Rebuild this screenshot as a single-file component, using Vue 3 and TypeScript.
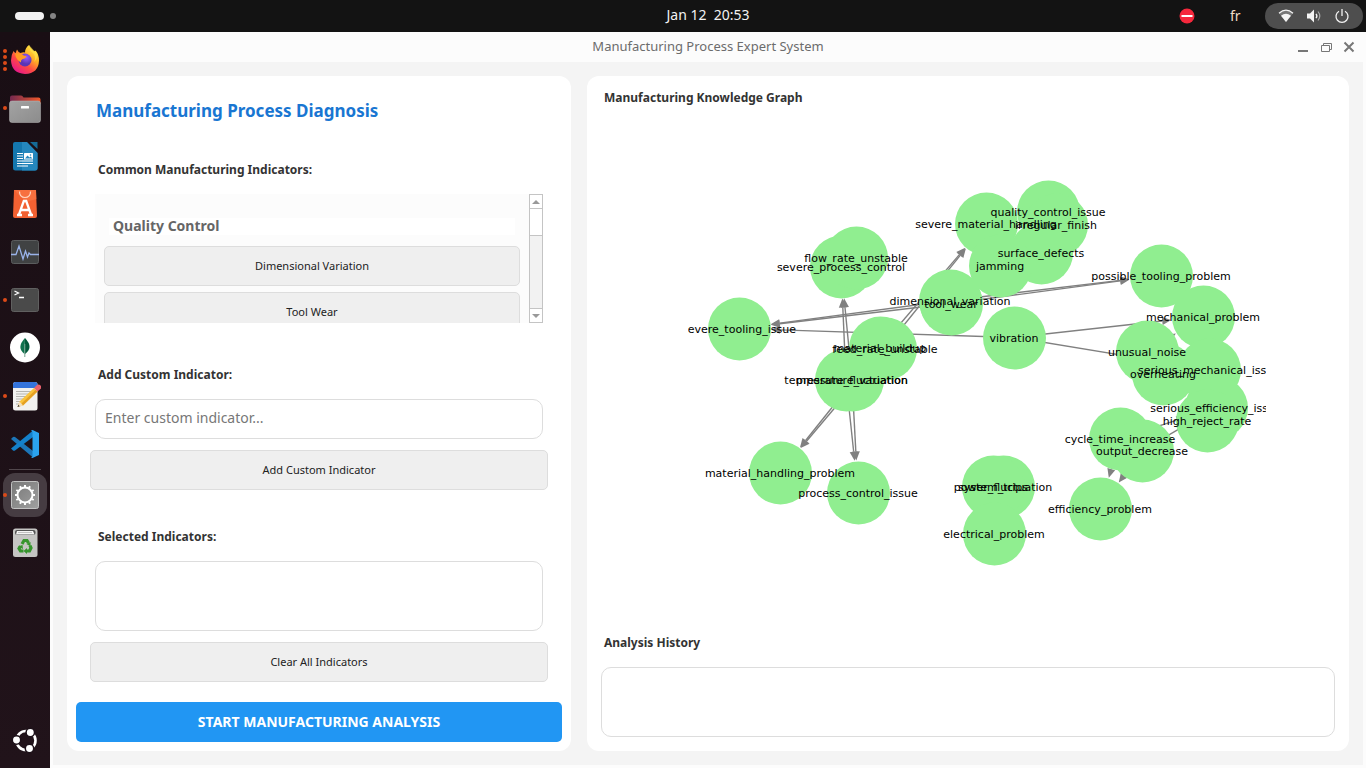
<script setup lang="ts">
import { computed, ref } from 'vue'

type Point = [number, number]

const RADIUS = 32
const HEAD = 9

const nodes: Record<string, Point> = {
  severe_tooling_issue: [50, 222],
  severe_process_control: [152, 160],
  flow_rate_unstable: [167, 151],
  severe_material_handling: [297, 117],
  quality_control_issue: [359, 105],
  irregular_finish: [367, 118],
  surface_defects: [352, 146],
  jamming: [311, 159],
  possible_tooling_problem: [472, 169],
  mechanical_problem: [514, 210],
  dimensional_variation: [261, 194],
  tool_wear: [262, 197],
  vibration: [325, 231],
  unusual_noise: [458, 245],
  overheating: [474, 267],
  serious_mechanical_issue: [520, 263],
  serious_efficiency_issue: [527, 301],
  high_reject_rate: [518, 314],
  cycle_time_increase: [431, 332],
  output_decrease: [453, 344],
  efficiency_problem: [411, 402],
  power_fluctuation: [314, 380],
  system_trips: [304, 380],
  electrical_problem: [305, 427],
  material_handling_problem: [91, 366],
  process_control_issue: [169, 386],
  feed_rate_unstable: [196, 242],
  material_buildup: [191, 241],
  temperature_variation: [157, 273],
  pressure_fluctuation: [163, 273],
}

const links: [string, string][] = [
  ['dimensional_variation', 'severe_tooling_issue'],
  ['tool_wear', 'severe_tooling_issue'],
  ['vibration', 'severe_tooling_issue'],
  ['dimensional_variation', 'possible_tooling_problem'],
  ['tool_wear', 'possible_tooling_problem'],
  ['vibration', 'mechanical_problem'],
  ['vibration', 'serious_mechanical_issue'],
  ['unusual_noise', 'mechanical_problem'],
  ['material_buildup', 'severe_material_handling'],
  ['feed_rate_unstable', 'severe_material_handling'],
  ['material_buildup', 'material_handling_problem'],
  ['feed_rate_unstable', 'material_handling_problem'],
  ['temperature_variation', 'severe_process_control'],
  ['pressure_fluctuation', 'severe_process_control'],
  ['temperature_variation', 'process_control_issue'],
  ['pressure_fluctuation', 'process_control_issue'],
  ['cycle_time_increase', 'efficiency_problem'],
  ['output_decrease', 'efficiency_problem'],
  ['cycle_time_increase', 'serious_efficiency_issue'],
  ['output_decrease', 'serious_efficiency_issue'],
]

const edges = computed(() =>
  links.map(([from, to]) => {
    const [x1, y1] = nodes[from]
    const [x2, y2] = nodes[to]
    const len = Math.hypot(x2 - x1, y2 - y1)
    const ux = (x2 - x1) / len
    const uy = (y2 - y1) / len
    const tx = x2 - ux * RADIUS
    const ty = y2 - uy * RADIUS
    const bx = tx - ux * HEAD
    const by = ty - uy * HEAD
    return {
      key: from + to,
      x1,
      y1,
      bx,
      by,
      head: `${tx},${ty} ${bx - uy * 4},${by + ux * 4} ${bx + uy * 4},${by - ux * 4}`,
    }
  }),
)

const gearTeeth = Array.from({ length: 12 }, (_, i) => i * 30)
const custom = ref('')
const selected = ref('')
const history = ref('')
const indicators = ['Dimensional Variation', 'Tool Wear']
</script>

<template>
  <div class="desktop">
    <header class="topbar">
      <div class="workspaces"><i class="pill"></i><i class="dot"></i></div>
      <time class="clock">Jan 12&nbsp; 20:53</time>
      <div class="tray">
        <svg class="busy" viewBox="0 0 16 16"><circle cx="8" cy="8" r="7.5" fill="#f5283c" /><path d="M2.5 8h11" stroke="#fff" stroke-width="2" /></svg>
        <span class="lang">fr</span>
        <button class="status" aria-label="System menu">
          <svg viewBox="0 0 16 16"><path d="M8 14 1 5.2Q8-.8 15 5.2Z" fill="#777" /><path d="M8 14 3 7.7Q8 4 13 7.7Z" fill="#f4f4f4" /><path d="M1 5.2Q8-.8 15 5.2" fill="none" stroke="#f4f4f4" stroke-width="1.3" /></svg>
          <svg viewBox="0 0 16 16"><path d="M1 5.5h3L8 1.5v13L4 10.5H1Z" fill="#f4f4f4" /><path d="M10 5.8q1.8 2.2 0 4.4" fill="none" stroke="#f4f4f4" stroke-width="1.3" /><path d="M12 3.5q3.6 4.5 0 9" fill="none" stroke="#aaa" stroke-width="1.2" /></svg>
          <svg viewBox="0 0 16 16"><path d="M5 3.2a6 6 0 1 0 6 0M8 1v7" fill="none" stroke="#f4f4f4" stroke-width="1.3" /></svg>
        </button>
      </div>
    </header>

    <div class="workarea">
      <nav class="dock" aria-label="Dock">
        <button class="app" aria-label="Firefox">
          <span class="running"><i v-for="n in 4" :key="n"></i></span>
          <svg viewBox="0 0 32 32">
            <defs>
              <linearGradient id="fox" x1=".85" y1=".05" x2=".2" y2=".95"><stop offset="0" stop-color="#fff14a" /><stop offset=".35" stop-color="#ffae25" /><stop offset=".65" stop-color="#ff4a43" /><stop offset="1" stop-color="#e6168c" /></linearGradient>
              <radialGradient id="globe" cx=".6" cy=".3"><stop offset="0" stop-color="#9a5cff" /><stop offset="1" stop-color="#5a35b5" /></radialGradient>
            </defs>
            <path d="M4.5 7q1 1.5 2 2.2L8 5.5q1 2.5 3.5 3.5 2.5-1 4.5-.5Q16 4 20 1q1 3.500 4.500 6 1.500.7 2-.5Q30 10.500 30 16.500 29.500 29.500 16 30 2.500 29 2 16.500 2 11 4.500 7Z" fill="url(#fox)" />
            <circle cx="16" cy="16" r="6.500" fill="url(#globe)" />
            <path d="M6 9.500q5-1 7.500 1 1 1.500 4 1.500-.5 2.500-4 3-2 1-1.500 3.500Q7 16 6 9.500Z" fill="#ff9b24" />
            <path d="M20 1q0 5 4 8 3.500 4 1 9 4-3 3-9-4-3-8-8Z" fill="#ffe14a" opacity=".7" />
          </svg>
        </button>
        <button class="app" aria-label="Files">
          <span class="running"><i></i></span>
          <svg viewBox="0 0 32 32">
            <defs><linearGradient id="fold"><stop offset="0" stop-color="#74294f" /><stop offset="1" stop-color="#f0592b" /></linearGradient><linearGradient id="fbody" x2="1" y2="1"><stop offset="0" stop-color="#a3a3a3" /><stop offset="1" stop-color="#8c8c8c" /></linearGradient></defs>
            <path d="M1 12V5.500Q1 3.500 3 3.500h9q1.500 0 2.500 2h15q2 0 2 2V12Z" fill="url(#fold)" />
            <rect x=".5" y="9" width="31" height="21.500" rx="2.500" fill="url(#fbody)" stroke="#b9b9b9" stroke-width=".5" />
            <rect x="12" y="14" width="8" height="2.500" rx=".5" fill="#fff" />
          </svg>
        </button>
        <button class="app" aria-label="LibreOffice Writer">
          <span class="running"></span>
          <svg viewBox="0 0 32 32">
            <path d="M6 2h11.500L28.500 13v15q0 2.500-2.500 2.500H6.500Q4 30.500 4 28V4q0-2 2-2Z" fill="#1477ae" />
            <path d="M13 2h5L28.500 13v15q0 2.500-2.500 2.500H13Z" fill="#2587bd" />
            <path d="M21 2h7.500v7Z" fill="#156a96" />
            <path d="M8 13.500h6M8 16h6M8 18.500h6M8 21h16M8 23.500h16M8 26h11" stroke="#fff" stroke-width="1.200" />
            <rect x="15" y="13" width="9" height="6.500" rx=".5" fill="#fff" /><path d="m16 18.500 2.500-3 2 2 1-1 2 2Z" fill="#2587bd" /><circle cx="21.500" cy="15" r=".8" fill="#2587bd" />
          </svg>
        </button>
        <button class="app" aria-label="Software">
          <span class="running"></span>
          <svg viewBox="0 0 32 32">
            <path d="M5 2h22l1 26q0 2-2 2H6q-2 0-2-2Z" fill="#f26132" /><path d="M5 2h22l.4 9L17 14Z" fill="#fa7947" opacity=".6" />
            <path d="M10.500 3.500q0 6 5.500 6t5.500-6" fill="none" stroke="#ffd5c0" stroke-width="1.200" /><path d="M10 26.500 14.800 13h2.400L22 26.500M8 27h5m6 0h5M11 22h10" fill="none" stroke="#fff" stroke-width="2.300" />
          </svg>
        </button>
        <button class="app" aria-label="System Monitor">
          <span class="running"></span>
          <svg viewBox="0 0 32 32"><rect x="2.500" y="4.500" width="27" height="23" rx="2" fill="#404243" stroke="#5b5d5e" /><path d="M2 18.500h5l3-8.500 4 13 2.500-8 2 6 1.500-4 1.500 1.500H30" fill="none" stroke="#9ab3ea" stroke-width="1.300" /></svg>
        </button>
        <button class="app" aria-label="Terminal">
          <span class="running"><i></i></span>
          <svg viewBox="0 0 32 32"><rect x="2.500" y="4.500" width="27" height="23" rx="2" fill="#4a4a4a" stroke="#606060" /><path d="m5.500 7 4 2-4 2M10 13.500h5" fill="none" stroke="#fff" stroke-width="1.300" /></svg>
        </button>
        <button class="app" aria-label="MongoDB Compass">
          <span class="running"></span>
          <svg viewBox="0 0 32 32"><circle cx="16" cy="15.500" r="15" fill="#fff" /><path d="M16 6q-9 9.500-.5 16Z" fill="#10734e" /><path d="M16 6q9 9.500 0 16Z" fill="#045a3b" /><path d="M15.800 12v13" stroke="#73a18d" /></svg>
        </button>
        <button class="app" aria-label="Text Editor">
          <span class="running"><i></i></span>
          <svg viewBox="0 0 32 32">
            <rect x="4" y="2" width="24.500" height="28.500" rx="2.500" fill="#f1f1ef" /><path d="M4 8V4.500Q4 2 6.500 2H26q2.500 0 2.500 2.500V8Z" fill="#3474dc" />
            <path d="M7 11.500h16M7 14h13M7 16.500h10M7 19h9M7 21.500h6M7 24h4" stroke="#b5b5b0" />
            <path d="m8.500 27 2-5.500L25 8l3.500 3.500-14.500 14Z" fill="#f9c33c" /><path d="m12.500 23.500 14-13.500 2 1.500-14.500 14Z" fill="#e4a022" /><path d="m8.500 27 2-5.500 3.500 4Z" fill="#f2dfc0" /><path d="m8.500 27 .8-2.200 1.400 1.400Z" fill="#333" /><path d="m25 8 3-3q2-1 3.500.5t.5 3L28.500 11.500Z" fill="#e8616c" />
          </svg>
        </button>
        <button class="app" aria-label="Visual Studio Code">
          <span class="running"></span>
          <svg viewBox="0 0 32 32"><path d="m2 11 2-2q1-.5 2 0l18 14v6.500Z" fill="#1c76b8" /><path d="m2 20.500 2 2q1 .6 2 0L24 9V2.500Z" fill="#1481cb" /><path d="M23.500 2 30 5v22l-6.500 3q-.8 0-1.500-.8.9.2 1.500-.8V4Q23 3 22 2.800q.7-.8 1.500-.8Z" fill="#2ba3ee" /></svg>
        </button>
        <hr class="divider" />
        <button class="app active" aria-label="Settings">
          <span class="running"><i></i></span>
          <svg viewBox="0 0 32 32">
            <defs><linearGradient id="set" x2="1" y2="1"><stop offset="0" stop-color="#777" /><stop offset="1" stop-color="#a0a0a0" /></linearGradient></defs>
            <rect x="2.500" y="2.500" width="27" height="27" rx="2" fill="url(#set)" stroke="#c2c2c2" />
            <circle cx="16" cy="16" r="7.500" fill="none" stroke="#fff" stroke-width="2" />
            <path v-for="a in gearTeeth" :key="a" d="M16 8V6" stroke="#fff" stroke-width="2" :transform="`rotate(${a} 16 16)`" />
          </svg>
        </button>
        <button class="app" aria-label="Trash">
          <span class="running"></span>
          <svg viewBox="0 0 32 32">
            <rect x="4" y="1.500" width="24.500" height="28.500" rx="2.500" fill="#c5c5c3" /><rect x="6" y="3" width="20.500" height="5" rx="2" fill="#555" /><path d="M7 7.500 8 4h16l1.500 3.500Z" fill="#f5f5f5" /><path d="M9 5.500h14" stroke="#aaa" stroke-width=".7" />
            <g fill="none" stroke="#36952d" stroke-width="3.200"><path d="m13 17 2-3.500h3L19.500 16" /><path d="m21 18.500 1 2.500-1.500 3H17" /><path d="M14.500 24h-3L10 21.500l1.500-2.500" /></g><path d="m17.500 17 4-2 0 4.500ZM18 21v6l-3.500-3ZM9 19.500l4.500-1.500.5 4Z" fill="#36952d" />
          </svg>
        </button>
        <button class="app launcher" aria-label="Show Applications">
          <span class="running"></span>
          <svg viewBox="0 0 32 32">
            <circle cx="17" cy="15.500" r="9.500" fill="none" stroke="#fff" stroke-width="2.600" />
            <g fill="#fff" stroke="#1d1119" stroke-width="1.500"><circle cx="7.500" cy="15" r="4.200" /><circle cx="21.300" cy="7.500" r="4.200" /><circle cx="20.500" cy="23.500" r="4.200" /></g>
          </svg>
        </button>
      </nav>

      <section class="window">
        <div class="titlebar">
          <h1>Manufacturing Process Expert System</h1>
          <div class="controls">
            <button aria-label="Minimize"><svg viewBox="0 0 12 12"><path d="M1 10h10" stroke="#777" stroke-width="2" /></svg></button>
            <button aria-label="Restore"><svg viewBox="0 0 12 12"><path d="M3.500 4V2.500h8v6H10M1.500 4.500h8v6h-8Z" fill="none" stroke="#777" /></svg></button>
            <button aria-label="Close"><svg viewBox="0 0 12 12"><path d="m1.500 1.500 9 9m0-9-9 9" stroke="#777" stroke-width="2" /></svg></button>
          </div>
        </div>

        <main class="content">
          <section class="card diagnosis">
            <h2>Manufacturing Process Diagnosis</h2>
            <h3>Common Manufacturing Indicators:</h3>
            <div class="scroller">
              <div class="list">
                <h4>Quality Control</h4>
                <button v-for="name in indicators" :key="name" class="plain">{{ name }}</button>
              </div>
              <div class="scrollbar">
                <button aria-label="Scroll up"><svg viewBox="0 0 8 4"><path d="M0 4 4 0l4 4Z" fill="#999" /></svg></button>
                <div class="thumb"></div>
                <div class="track"></div>
                <button aria-label="Scroll down"><svg viewBox="0 0 8 4"><path d="m0 0 4 4 4-4Z" fill="#999" /></svg></button>
              </div>
            </div>
            <label class="heading later" for="custom">Add Custom Indicator:</label>
            <input id="custom" v-model="custom" class="field" type="text" placeholder="Enter custom indicator..." />
            <button class="plain wide">Add Custom Indicator</button>
            <label class="heading selected" for="selected">Selected Indicators:</label>
            <textarea id="selected" v-model="selected" class="field area" readonly></textarea>
            <button class="plain wide">Clear All Indicators</button>
            <button class="primary">START MANUFACTURING ANALYSIS</button>
          </section>

          <section class="card knowledge">
            <h3>Manufacturing Knowledge Graph</h3>
            <svg class="graph" viewBox="-88 1 734 525" role="img" aria-label="Manufacturing Knowledge Graph">
              <defs><clipPath id="plot"><rect x="-1" y="0" width="578" height="526" /></clipPath></defs>
              <g clip-path="url(#plot)">
                <g v-for="e in edges" :key="e.key">
                  <line :x1="e.x1" :y1="e.y1" :x2="e.bx" :y2="e.by" stroke="#808080" stroke-width="1.4" />
                  <polygon :points="e.head" fill="#808080" />
                </g>
                <circle v-for="(p, name) in nodes" :key="name" :cx="p[0] + 0.5" :cy="p[1] + 0.5" r="31.5" fill="#90ee90" />
                <text v-for="(p, name) in nodes" :key="name" :x="p[0]" :y="p[1] + 4" text-anchor="middle">{{ name }}</text>
              </g>
            </svg>
            <label class="heading" for="history">Analysis History</label>
            <textarea id="history" v-model="history" class="field area" readonly></textarea>
          </section>
        </main>
      </section>
    </div>
  </div>
</template>

<style>
body {
  margin: 0;
}
</style>

<style scoped>
.desktop {
  display: flex;
  flex-direction: column;
  min-height: 100vh;
  font-family: 'Noto Sans', 'Open Sans', sans-serif;
  color: #333;
  background: #131313;
}
.desktop * {
  box-sizing: border-box;
}
button {
  margin: 0;
  padding: 0;
  border: 0;
  background: none;
  font-family: inherit;
  color: inherit;
}
svg {
  display: block;
}
.topbar {
  display: grid;
  grid-template-columns: 53px 1fr auto 1fr;
  align-items: center;
  height: 32px;
  padding-right: 3px;
  color: #f2f2f2;
}
.workspaces {
  display: flex;
  align-items: center;
  gap: 6px;
  padding-left: 15px;
}
.pill {
  flex: none;
  width: 29px;
  height: 8px;
  border-radius: 4px;
  background: #f2f2f2;
}
.dot {
  flex: none;
  width: 6px;
  height: 6px;
  border-radius: 3px;
  background: #848484;
}
.clock {
  grid-column: 3;
  padding-bottom: 2px;
  font-size: 14px;
  line-height: 20px;
}
.tray {
  display: flex;
  align-items: center;
  justify-content: flex-end;
}
.busy {
  width: 16px;
  height: 16px;
}
.lang {
  width: 70px;
  padding-left: 35px;
  font-size: 14px;
  line-height: 20px;
  color: #efdcc8;
}
.status {
  display: flex;
  align-items: center;
  justify-content: center;
  gap: 12px;
  width: 98px;
  height: 26px;
  border-radius: 13px;
  background: #4e4e4e;
}
.status svg {
  width: 16px;
  height: 16px;
}
.workarea {
  display: flex;
  flex: 1;
}
.dock {
  display: flex;
  flex-direction: column;
  flex: none;
  width: 50px;
  padding: 4px 0 3px;
  background: linear-gradient(#190e14, #21131a);
}
.app {
  display: flex;
  align-items: center;
  width: 50px;
  height: 48px;
}
.app svg {
  flex: none;
  width: 32px;
  height: 32px;
}
.app.active {
  width: 44px;
  height: 44px;
  margin: 2px 3px;
  border-radius: 12px;
  background: #463c42;
}
.app.active .running {
  width: 6px;
  padding-left: 0;
}
.running {
  display: flex;
  flex-direction: column;
  gap: 2px;
  width: 9px;
  padding-left: 3px;
}
.running i {
  width: 4px;
  height: 4px;
  border-radius: 2px;
  background: #dc4a18;
}
.divider {
  width: 32px;
  height: 1px;
  margin: 1px 9px;
  border: 0;
  background: #51474c;
}
.launcher {
  margin-top: auto;
}
.window {
  display: flex;
  flex-direction: column;
  flex: 1;
  padding: 0 3px 3px;
  background: #fcfcfc;
}
.titlebar {
  display: flex;
  align-items: center;
  height: 30px;
  padding-right: 8px;
}
h1 {
  flex: 1;
  margin: 0;
  padding: 0 0 2px 66px;
  text-align: center;
  font-size: 13px;
  line-height: 20px;
  font-weight: 400;
  color: #6c6c6c;
}
.controls {
  display: flex;
  gap: 11px;
}
.controls svg {
  width: 12px;
  height: 12px;
}
.content {
  display: grid;
  grid-template-columns: 504fr 762fr;
  gap: 16px;
  flex: 1;
  padding: 14px;
  background: #f4f4f4;
}
.card {
  display: flex;
  flex-direction: column;
  min-width: 0;
  border-radius: 12px;
  background: #fff;
}
.diagnosis {
  padding: 10px 9px 9px;
}
h2 {
  margin: 0 0 24px;
  padding-left: 20px;
  font-size: 17px;
  line-height: 50px;
  color: #1976d2;
}
h3,
.heading {
  margin: 0 0 14px;
  padding-left: 3px;
  font-size: 12px;
  line-height: 20px;
  font-weight: 700;
  color: #333;
}
.diagnosis h3,
.diagnosis .heading {
  padding-left: 22px;
}
.diagnosis .later {
  margin-top: 42px;
}
.diagnosis .selected {
  margin-top: 37px;
}
.scroller {
  display: flex;
  flex: 1 0 129px;
  height: 129px;
  margin: 0 19px;
  overflow: hidden;
  background: #fcfcfc;
}
.list {
  display: flex;
  flex-direction: column;
  flex: 1;
  gap: 6px;
  height: 129px;
  padding: 24px 9px 0;
  overflow: hidden;
}
h4 {
  flex: none;
  margin: 0 5px 5px;
  padding: 0 0 2px 4px;
  font-size: 14px;
  line-height: 15px;
  color: #666;
  background: #fff;
}
.plain {
  flex: none;
  height: 40px;
  padding-bottom: 2px;
  border: 1px solid #ddd;
  border-radius: 5px;
  background: #efefef;
  font-size: 11px;
  color: #222;
}
.wide {
  margin: 11px 14px 0;
}
.scrollbar {
  display: flex;
  flex-direction: column;
  flex: none;
  width: 14px;
  border: 1px solid #c4c4c4;
  background: #fff;
}
.scrollbar button {
  display: grid;
  place-items: center;
  height: 13px;
}
.scrollbar svg {
  width: 8px;
  height: 4px;
}
.thumb {
  height: 28px;
  border: solid #c4c4c4;
  border-width: 1px 0;
}
.track {
  flex: 1;
  border-bottom: 1px solid #c4c4c4;
  background: #f2f2f2;
}
.field {
  display: block;
  flex: none;
  height: 40px;
  margin: 0 19px;
  padding: 0 9px 4px;
  border: 1px solid #ddd;
  border-radius: 10px;
  outline: 0;
  background: #fff;
  font-family: inherit;
  font-size: 14px;
  color: #333;
}
.field::placeholder {
  color: #777;
  opacity: 1;
}
.area {
  height: 70px;
  resize: none;
}
.primary {
  flex: none;
  height: 40px;
  margin-top: 20px;
  padding-bottom: 2px;
  border-radius: 5px;
  background: #2196f3;
  font-size: 14px;
  font-weight: 700;
  color: #fff;
}
.knowledge {
  padding: 12px 14px 14px;
}
.knowledge h3 {
  margin: 0 0 -1px;
}
.knowledge .field {
  margin: 0;
}
.graph {
  flex: 1 1 0;
  width: 100%;
  min-height: 0;
}
.graph text {
  font-family: 'DejaVu Sans', sans-serif;
  font-size: 11px;
  fill: #000;
}
</style>
